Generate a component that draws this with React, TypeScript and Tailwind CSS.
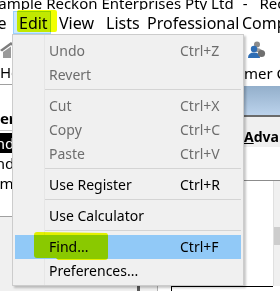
import React from 'react';

type MenuEntry =
  | { kind: 'item'; label: string; shortcut?: string; disabled?: boolean; active?: boolean }
  | { kind: 'sep' };

const entries: MenuEntry[] = [
  { kind: 'item', label: 'Undo', shortcut: 'Ctrl+Z', disabled: true },
  { kind: 'item', label: 'Revert', disabled: true },
  { kind: 'sep' },
  { kind: 'item', label: 'Cut', shortcut: 'Ctrl+X', disabled: true },
  { kind: 'item', label: 'Copy', shortcut: 'Ctrl+C', disabled: true },
  { kind: 'item', label: 'Paste', shortcut: 'Ctrl+V', disabled: true },
  { kind: 'sep' },
  { kind: 'item', label: 'Use Register', shortcut: 'Ctrl+R' },
  { kind: 'sep' },
  { kind: 'item', label: 'Use Calculator' },
  { kind: 'sep' },
  { kind: 'item', label: 'Find...', shortcut: 'Ctrl+F', active: true },
  { kind: 'item', label: 'Preferences...' },
];

const HouseIcon = () => (
  <svg width="13" height="16" viewBox="0 0 13 16">
    <path d="M11 0 L0 8 L2 9.5 L11 3 L13 4.5 V2 Z" fill="#7d7d7d" />
    <path d="M3 10 L11 4.5 V16 H3 Z" fill="#9a9a9a" />
  </svg>
);

const PeopleIcon = () => (
  <svg width="19" height="17" viewBox="0 0 19 17">
    <circle cx="10" cy="3.5" r="3" fill="#8a8a8a" />
    <path d="M5 9 Q10 5 15 9 V11 H5 Z" fill="#9c9c9c" />
    <circle cx="7" cy="8" r="3.2" fill="#2e6db4" />
    <path d="M1 17 Q1 11.5 7 11.5 Q13 11.5 13 17 Z" fill="#2e6db4" />
    <circle cx="14.5" cy="12.5" r="3.6" fill="#6f6f6f" />
  </svg>
);

const EditMenu = () => (
  <div className="absolute left-[12px] top-[34px] w-[232px] border border-[#cccccc] bg-[#f0f0f0] pt-[4px] pb-[2px] text-[14px] shadow-[2px_2px_2px_rgba(0,0,0,0.22)]">
    <div className="absolute left-[31px] top-0 bottom-0 w-px bg-[#e6e6e6]" />
    {entries.map((e, i) =>
      e.kind === 'sep' ? (
        <div key={i} className="mx-[2px] h-[7px] pt-[2px]">
          <div className="ml-[29px] h-px bg-[#d4d4d4]" />
        </div>
      ) : (
        <div
          key={i}
          className={`relative mx-[2px] flex h-[24px] items-center ${e.active ? 'bg-[#91c9f7]' : ''} ${
            e.disabled ? 'text-[#6d6d6d]' : 'text-black'
          }`}
        >
          <span className="w-[165px] shrink-0 pl-[34px]">{e.label}</span>
          {e.shortcut && <span className="shrink-0">{e.shortcut}</span>}
          {e.active && (
            <svg className="absolute left-[19px] top-[-3px] mix-blend-multiply" width="75" height="29" viewBox="0 0 75 29">
              <path
                d="M3 0 L72 1 Q74 1 74 4 L74 25 Q74 28 71 28 L24 28 L22 26 L3 26 Q0 26 0 23 L0 3 Q0 0 3 0 Z"
                fill="#f2ff00"
              />
            </svg>
          )}
        </div>
      )
    )}
  </div>
);

export default function App() {
  return (
    <div className="relative flex h-[291px] w-[280px] flex-col overflow-hidden bg-white font-['Noto_Sans',sans-serif] text-[15px] leading-[20px] text-black">
      {/* Title bar */}
      <div className="h-[10px] shrink-0 overflow-hidden">
        <div className="-ml-[10px] -mt-[7px] flex whitespace-nowrap text-[15px]">
          <span className="shrink-0">Sample Reckon Enterprises Pty Ltd</span>
          <span className="ml-[9px] shrink-0">-</span>
          <span className="ml-[12px] shrink-0">Reckon Accounts</span>
        </div>
      </div>

      {/* Menu bar */}
      <div className="flex h-[24px] shrink-0 items-start overflow-hidden whitespace-nowrap pt-[1px] text-[16px]">
        <span className="-ml-[19px] h-[23px] w-[32px] shrink-0 pt-[2px] leading-[21px]">File</span>
        <div className="relative h-[23px] w-[38px] shrink-0 border border-[#99d1ff] bg-[#cce8ff] pl-[5px] pt-[1px] leading-[21px]">
          Edit
          <div className="absolute left-[3px] top-[-2px] h-[22px] w-[40px] rounded-[2px] bg-[#f2ff00] mix-blend-multiply" />
        </div>
        <span className="ml-[8px] h-[23px] w-[47px] shrink-0 pt-[2px] leading-[21px]">View</span>
        <span className="h-[23px] w-[41px] shrink-0 pt-[2px] leading-[21px]">Lists</span>
        <span className="h-[23px] w-[95px] shrink-0 pt-[2px] leading-[21px]">Professional</span>
        <span className="h-[23px] shrink-0 pt-[2px] leading-[21px]">Company</span>
      </div>

      {/* Window body */}
      <div className="flex min-h-0 flex-1">
        {/* Left strip */}
        <div className="flex w-[13px] shrink-0 flex-col overflow-hidden whitespace-nowrap">
          <div className="flex h-[26px] items-end pb-[2px]">
            <HouseIcon />
          </div>
          <div className="h-[24px] pt-[2px]">Ho</div>
          <div className="h-px bg-[#a0a0a0]" />
          <div className="h-[23px]" />
          <div className="-ml-[39px] h-[20px] font-bold">Header</div>
          <div className="mt-[2px] h-px bg-[#c8c8c8]" />
          <div className="mt-[2px] h-[20px] bg-black text-white">
            <span className="-ml-[16px]">Find</span>
          </div>
          <div className="h-[20px]">
            <span className="-ml-[16px]">Find</span>
          </div>
          <div className="h-[20px]">
            <span className="-ml-[19px]">Com</span>
          </div>
          <div className="h-[23px]" />
          <div className="h-px bg-[#a0a0a0]" />
          <div className="flex-1 bg-[#f0f0f0]" />
        </div>

        <div className="flex-1 bg-[#f0f0f0]" />

        {/* Right strip */}
        <div className="flex w-[37px] shrink-0 flex-col overflow-hidden whitespace-nowrap">
          <div className="flex h-[26px] items-end bg-white pb-[2px] pl-[4px]">
            <PeopleIcon />
          </div>
          <div className="h-[26px] bg-white pl-[1px] pt-[3px]">mer Centre</div>
          <div className="h-[29px] bg-gradient-to-b from-[#93afcb] to-[#bcd3ec]" />
          <div className="h-[2px] bg-[#6b6b6b]" />
          <div className="h-[30px] bg-[#f0f0f0] pl-[1px] pt-[10px] text-[14px] font-bold leading-[20px]">
            <span className="underline">A</span>dvanced
          </div>
          <div className="h-[33px] bg-white" />
          <div className="h-px bg-[#8c8c8c]" />
          <div className="flex flex-1 bg-white">
            <div className="flex-1" />
            <div className="w-px bg-[#e0e0e0]" />
            <div className="flex w-[6px] flex-col bg-[#f0f0f0]">
              <div className="h-[46px]" />
              <div className="h-[18px] bg-[#cdcdcd]" />
            </div>
          </div>
        </div>
      </div>

      {/* Bottom strip below menu */}
      <div className="flex h-[5px] shrink-0 bg-[#f0f0f0]">
        <div className="w-[137px] shrink-0" />
        <div className="w-[3px] shrink-0 bg-[#5a5a5a]" />
        <div className="w-[17px] shrink-0" />
        <div className="w-px shrink-0 bg-[#b0b0b0]" />
        <div className="w-[13px] shrink-0 bg-white" />
        <div className="w-[102px] shrink-0 overflow-hidden border-l border-t border-black bg-white pl-[2px] text-[15px] leading-[20px]">
          Name
        </div>
        <div className="flex-1 bg-white" />
      </div>

      <EditMenu />
    </div>
  );
}
